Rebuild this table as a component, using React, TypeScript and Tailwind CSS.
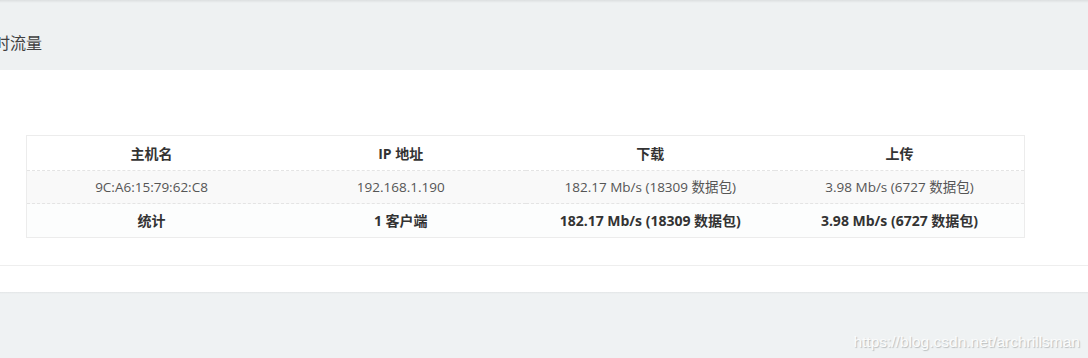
import React from 'react';

const rows = [
    { host: '9C:A6:15:79:62:C8', ip: '192.168.1.190', down: '182.17 Mb/s (18309 数据包)', up: '3.98 Mb/s (6727 数据包)' },
];

const font = { fontFamily: '"Open Sans", "Noto Sans CJK SC", sans-serif' };

const App: React.FC = () => {
    return (
        <div className="relative min-h-[358px] w-[1088px] overflow-hidden bg-[#eff2f3]" style={font}>
            {/* top shadow */}
            <div className="h-[3px] bg-gradient-to-b from-[#dcdfe0] to-[#eef1f2]" />
            <div className="flex h-[67px] items-center bg-[#eef1f2] pt-[12px]">
                <h2 className="-ml-[22px] text-[16px] font-normal text-[#404040]">实时流量</h2>
            </div>

            <div className="bg-white">
                <div className="pl-[26px] pr-[63px] pt-[65px] pb-[27px]">
                    <table className="w-full table-fixed border-collapse border border-[#ececec] text-[13.5px]">
                        <thead>
                            <tr className="h-[35px] bg-white text-[14px]">
                                <th className="font-bold text-[#333]">主机名</th>
                                <th className="font-bold text-[#333]">IP 地址</th>
                                <th className="font-bold text-[#333]">下载</th>
                                <th className="font-bold text-[#333]">上传</th>
                            </tr>
                        </thead>
                        <tbody>
                            {rows.map((r) => (
                                <tr key={r.host} className="h-[33px] border-t border-dashed border-[#e4e4e4] bg-[#f9f9f9] text-center text-[#555]">
                                    <td>{r.host}</td>
                                    <td>{r.ip}</td>
                                    <td>{r.down}</td>
                                    <td>{r.up}</td>
                                </tr>
                            ))}
                            <tr className="h-[34px] border-t border-dashed border-[#e4e4e4] bg-[#fcfdfd] text-center text-[14px] font-bold text-[#333]">
                                <td>统计</td>
                                <td>1 客户端</td>
                                <td>182.17 Mb/s (18309 数据包)</td>
                                <td>3.98 Mb/s (6727 数据包)</td>
                            </tr>
                        </tbody>
                    </table>
                </div>
                <div className="h-[27px] border-t border-[#eeeeee]" />
            </div>
            <div className="h-[2px] bg-gradient-to-b from-[#e2e5e6] to-[#eff2f3]" />

            {/* watermark */}
            <span className="absolute right-[8px] top-[330px] text-[15.5px] text-[#fbfcfc] [text-shadow:1px_1px_1px_#b9bdbe]" style={{ fontFamily: '"Liberation Sans", sans-serif' }}>
                https://blog.csdn.net/archrillsman
            </span>
        </div>
    );
};

export default App;
